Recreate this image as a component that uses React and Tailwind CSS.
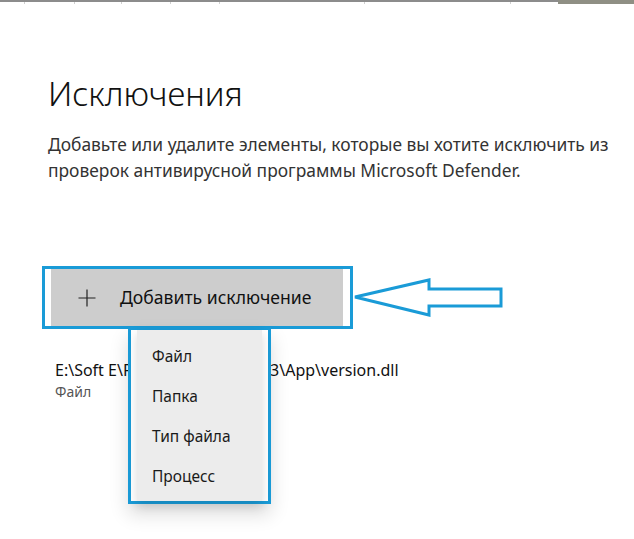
const FONT = { fontFamily: '"Segoe UI", "Noto Sans", "Open Sans", sans-serif' }

const MENU_ITEMS = ['Файл', 'Папка', 'Тип файла', 'Процесс']

function TopRuler() {
  // thin window edge with tick marks and a scrollbar stub on the right
  const ticks = [24, 74, 121, 170, 219, 364, 510]
  return (
    <div className="relative flex h-[4px] items-start">
      <div className="h-[2px] flex-1 bg-[#8c8c8c]" />
      <div className="h-[4px] w-[76px] bg-[#8f8f84]" />
      {ticks.map(x => (
        <div key={x} className="absolute top-[2px] h-[2px] w-px bg-[#d0d0d0]" style={{ left: x }} />
      ))}
    </div>
  )
}

function PlusIcon() {
  return (
    <svg width="18" height="18" viewBox="0 0 18 18" className="block">
      <path d="M9 0.5V17.5M0.5 9H17.5" stroke="#222" strokeWidth="1.2" fill="none" />
    </svg>
  )
}

function Arrow() {
  return (
    <svg width="150" height="44" viewBox="0 0 150 44" className="block">
      <polygon
        points="2,21 76,4 76,13 148,13 148,30 76,30 76,39"
        fill="none"
        stroke="#1a9bd7"
        strokeWidth="3"
        strokeLinejoin="miter"
      />
    </svg>
  )
}

export default function App() {
  return (
    <div className="relative h-[539px] w-[634px] overflow-hidden bg-white text-[#1a1a1a]" style={FONT}>
      <TopRuler />

      <div className="pl-[48px] pt-[70px]">
        <h1 className="text-[33px] font-light leading-[40px] text-[#111]">Исключения</h1>
        <p className="mt-[17px] text-[17.4px] leading-[26px] text-[#333]">
          Добавьте или удалите элементы, которые вы хотите исключить из
          <br />
          проверок антивирусной программы Microsoft Defender.
        </p>
      </div>

      {/* add-exclusion button, outlined, with the pointer arrow beside it */}
      <div className="ml-[42px] mt-[83px] flex items-center">
        <div className="border-[3px] border-[#1a9bd7] pl-[6px] pr-[7px]">
          <div className="flex h-[57px] w-[292px] items-center gap-[24px] bg-[#cdcdcd] pl-[27px]">
            <PlusIcon />
            <span className="text-[17.6px] text-[#111]">Добавить исключение</span>
          </div>
        </div>
        <Arrow />
      </div>

      {/* existing exclusion row */}
      <div className="ml-[55px] mt-[29px]">
        <div className="text-[16px] leading-[24px] text-[#111]">E:\Soft E\Portable\Programs 3\App\version.dll</div>
        <div className="text-[14px] leading-[20px] text-[#555]">Файл</div>
      </div>

      {/* dropdown with the type choices */}
      <div className="absolute left-[128px] top-[327px] h-[177px] w-[143px] border-[3px] border-[#1a9bd7] bg-white px-[6px] shadow-[0_10px_18px_rgba(0,0,0,0.14)]">
        <div className="flex h-full flex-col bg-[#ececec] pt-[7px] shadow-[0_4px_10px_rgba(0,0,0,0.15)]">
          {MENU_ITEMS.map(item => (
            <div key={item} className="flex h-[40px] items-center pl-[15px] text-[15.5px] text-[#1a1a1a]">
              {item}
            </div>
          ))}
        </div>
      </div>
    </div>
  )
}
